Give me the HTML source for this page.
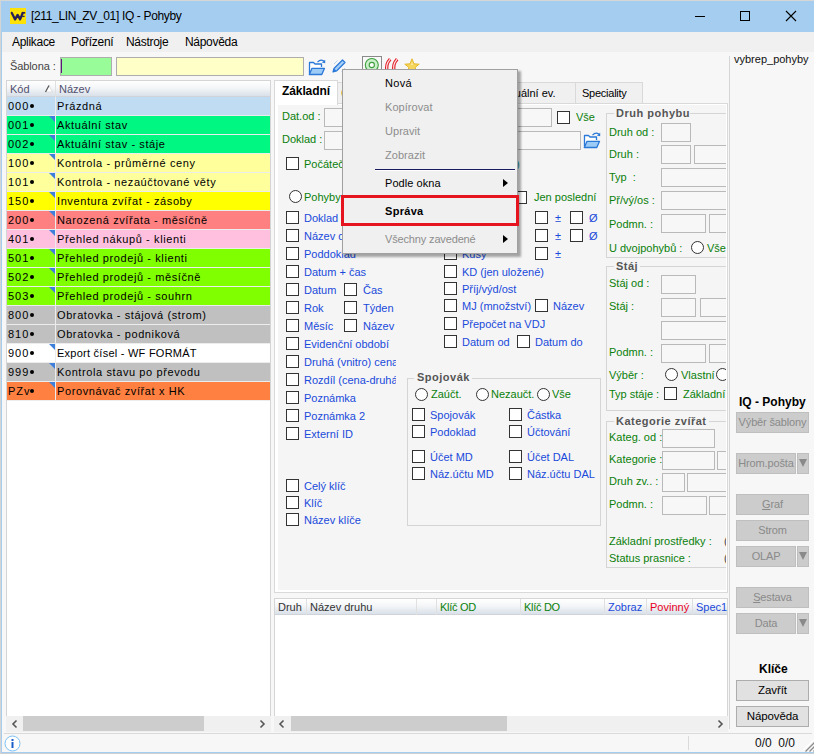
<!DOCTYPE html><html><head><meta charset="utf-8"><style>
*{box-sizing:border-box;margin:0;padding:0}
html,body{width:814px;height:754px;overflow:hidden;background:#cfcfcf}
body{position:relative;font-family:"Liberation Sans",sans-serif;font-size:11px;color:#000}
.a{position:absolute}
.t{position:absolute;white-space:nowrap;line-height:1}
</style></head><body><div class="a" style="left:1px;top:0px;width:813px;height:753px;background:#f7f7f7;border-left:1px solid #a4cdf0;border-bottom:1px solid #a4cdf0"></div>
<div class="a" style="left:0px;top:0px;width:1px;height:754px;background:#d4d4d4"></div>
<div class="a" style="left:1px;top:0px;width:813px;height:32px;background:#a4cdf0"></div>
<div class="a" style="left:0px;top:0px;width:814px;height:1px;background:#d6d6d6"></div>
<div class="a" style="left:2px;top:32px;width:812px;height:20px;background:#f0f0f0"></div>
<svg class="a" style="left:10px;top:8px" width="16" height="16" viewBox="0 0 16 16"><rect width="16" height="16" fill="#ffe205"/><path d="M1.8 4.9L5.1 11.4L7.6 6.9L10.1 11.4L12.7 5" fill="none" stroke="#2a2058" stroke-width="2.3" stroke-linejoin="round" stroke-linecap="round"/><path d="M11.8 4.8H15.2" stroke="#2a2058" stroke-width="1.7"/><path d="M12.2 8.4H14.6" stroke="#2a2058" stroke-width="1.3"/></svg>
<div class="t" style="left:31px;top:10px;font-size:12px;color:#000;font-weight:400;letter-spacing:-0.35px;">[211_LIN_ZV_01] IQ - Pohyby</div>
<div class="a" style="left:695px;top:16px;width:10px;height:1px;background:#000"></div>
<div class="a" style="left:740px;top:11px;width:10px;height:10px;border:1px solid #000"></div>
<svg class="a" style="left:785px;top:10px" width="12" height="12" viewBox="0 0 12 12"><path d="M1 1L11 11M11 1L1 11" stroke="#000" stroke-width="1.1"/></svg>
<div class="t" style="left:12px;top:36px;font-size:12px;color:#000;font-weight:400;letter-spacing:-0.3px;">Aplikace</div>
<div class="t" style="left:71px;top:36px;font-size:12px;color:#000;font-weight:400;letter-spacing:-0.3px;">Pořízení</div>
<div class="t" style="left:126px;top:36px;font-size:12px;color:#000;font-weight:400;letter-spacing:-0.3px;">Nástroje</div>
<div class="t" style="left:185px;top:36px;font-size:12px;color:#000;font-weight:400;letter-spacing:-0.3px;">Nápověda</div>
<div class="t" style="left:10px;top:61px;font-size:11px;color:#444;font-weight:400;letter-spacing:-0.1px;">Šablona :</div>
<div class="a" style="left:60px;top:57px;width:52px;height:19px;background:#98fc98;border:1px solid #adadad"></div>
<div class="a" style="left:61px;top:59px;width:1px;height:14px;background:#5a1a7a"></div>
<div class="a" style="left:116px;top:57px;width:188px;height:19px;background:#ffffc8;border:1px solid #adadad"></div>
<div class="a" style="left:6px;top:80px;width:265px;height:636px;background:#fff;border:1px solid #d5d5d5;border-bottom:none"></div>
<div class="a" style="left:7px;top:81px;width:263px;height:16px;background:linear-gradient(#ffffff,#f3f5f7 45%,#d6dee7)"></div>
<div class="a" style="left:7px;top:96px;width:263px;height:1px;background:#d0d4da"></div>
<div class="a" style="left:55px;top:81px;width:1px;height:16px;background:#e0e0e0"></div>
<div class="t" style="left:10px;top:84px;font-size:11px;color:#505070;font-weight:400;letter-spacing:0px;">Kód</div>
<svg class="a" style="left:44px;top:84px" width="10" height="9" viewBox="0 0 10 9"><path d="M1.5 8L5 1.5L8.5 8Z" fill="#fff" stroke="#d8d8d8" stroke-width="0.8"/><path d="M1.5 8L5 1.5" stroke="#555" stroke-width="1.2"/></svg>
<div class="t" style="left:59px;top:84px;font-size:11px;color:#505070;font-weight:400;letter-spacing:0px;">Název</div>
<div class="a" style="left:7px;top:97px;width:48px;height:18px;background:#c0dcf3"></div>
<div class="a" style="left:56px;top:97px;width:214px;height:18px;background:#c0dcf3"></div>
<div class="a" style="left:7px;top:115px;width:263px;height:1px;background:#ececec"></div>
<div class="a" style="left:55px;top:97px;width:1px;height:18px;background:#ececec"></div>
<div class="t" style="left:8px;top:101px;font-size:11px;color:#000;font-weight:400;letter-spacing:1.0px;">000</div>
<div class="a" style="left:30px;top:104px;width:4.3px;height:4.3px;border-radius:50%;background:#000"></div>
<div class="t" style="left:57px;top:101px;font-size:11px;color:#000;font-weight:400;letter-spacing:0.6px;">Prázdná</div>
<div class="a" style="left:7px;top:116px;width:48px;height:18px;background:#00f882"></div>
<div class="a" style="left:56px;top:116px;width:214px;height:18px;background:#00f882"></div>
<div class="a" style="left:7px;top:134px;width:263px;height:1px;background:#ececec"></div>
<div class="a" style="left:55px;top:116px;width:1px;height:18px;background:#ececec"></div>
<div class="a" style="left:49px;top:116px;width:0;height:0;border-top:6px solid #3f7fdc;border-left:6px solid transparent"></div>
<div class="t" style="left:8px;top:120px;font-size:11px;color:#000;font-weight:400;letter-spacing:1.0px;">001</div>
<div class="a" style="left:30px;top:123px;width:4.3px;height:4.3px;border-radius:50%;background:#000"></div>
<div class="t" style="left:57px;top:120px;font-size:11px;color:#000;font-weight:400;letter-spacing:0.6px;">Aktuální stav</div>
<div class="a" style="left:7px;top:135px;width:48px;height:18px;background:#00f882"></div>
<div class="a" style="left:56px;top:135px;width:214px;height:18px;background:#00f882"></div>
<div class="a" style="left:7px;top:153px;width:263px;height:1px;background:#ececec"></div>
<div class="a" style="left:55px;top:135px;width:1px;height:18px;background:#ececec"></div>
<div class="a" style="left:49px;top:135px;width:0;height:0;border-top:6px solid #3f7fdc;border-left:6px solid transparent"></div>
<div class="t" style="left:8px;top:139px;font-size:11px;color:#000;font-weight:400;letter-spacing:1.0px;">002</div>
<div class="a" style="left:30px;top:142px;width:4.3px;height:4.3px;border-radius:50%;background:#000"></div>
<div class="t" style="left:57px;top:139px;font-size:11px;color:#000;font-weight:400;letter-spacing:0.6px;">Aktuální stav - stáje</div>
<div class="a" style="left:7px;top:154px;width:48px;height:18px;background:#ffff9c"></div>
<div class="a" style="left:56px;top:154px;width:214px;height:18px;background:#ffff9c"></div>
<div class="a" style="left:7px;top:172px;width:263px;height:1px;background:#ececec"></div>
<div class="a" style="left:55px;top:154px;width:1px;height:18px;background:#ececec"></div>
<div class="a" style="left:49px;top:154px;width:0;height:0;border-top:6px solid #3f7fdc;border-left:6px solid transparent"></div>
<div class="t" style="left:8px;top:158px;font-size:11px;color:#000;font-weight:400;letter-spacing:1.0px;">100</div>
<div class="a" style="left:30px;top:161px;width:4.3px;height:4.3px;border-radius:50%;background:#000"></div>
<div class="t" style="left:57px;top:158px;font-size:11px;color:#000;font-weight:400;letter-spacing:0.6px;">Kontrola - průměrné ceny</div>
<div class="a" style="left:7px;top:173px;width:48px;height:18px;background:#ffff9c"></div>
<div class="a" style="left:56px;top:173px;width:214px;height:18px;background:#ffff9c"></div>
<div class="a" style="left:7px;top:191px;width:263px;height:1px;background:#ececec"></div>
<div class="a" style="left:55px;top:173px;width:1px;height:18px;background:#ececec"></div>
<div class="a" style="left:49px;top:173px;width:0;height:0;border-top:6px solid #3f7fdc;border-left:6px solid transparent"></div>
<div class="t" style="left:8px;top:177px;font-size:11px;color:#000;font-weight:400;letter-spacing:1.0px;">101</div>
<div class="a" style="left:30px;top:180px;width:4.3px;height:4.3px;border-radius:50%;background:#000"></div>
<div class="t" style="left:57px;top:177px;font-size:11px;color:#000;font-weight:400;letter-spacing:0.6px;">Kontrola - nezaúčtované věty</div>
<div class="a" style="left:7px;top:192px;width:48px;height:18px;background:#ffff00"></div>
<div class="a" style="left:56px;top:192px;width:214px;height:18px;background:#ffff00"></div>
<div class="a" style="left:7px;top:210px;width:263px;height:1px;background:#ececec"></div>
<div class="a" style="left:55px;top:192px;width:1px;height:18px;background:#ececec"></div>
<div class="a" style="left:49px;top:192px;width:0;height:0;border-top:6px solid #3f7fdc;border-left:6px solid transparent"></div>
<div class="t" style="left:8px;top:196px;font-size:11px;color:#000;font-weight:400;letter-spacing:1.0px;">150</div>
<div class="a" style="left:30px;top:199px;width:4.3px;height:4.3px;border-radius:50%;background:#000"></div>
<div class="t" style="left:57px;top:196px;font-size:11px;color:#000;font-weight:400;letter-spacing:0.6px;">Inventura zvířat - zásoby</div>
<div class="a" style="left:7px;top:211px;width:48px;height:18px;background:#ff8080"></div>
<div class="a" style="left:56px;top:211px;width:214px;height:18px;background:#ff8080"></div>
<div class="a" style="left:7px;top:229px;width:263px;height:1px;background:#ececec"></div>
<div class="a" style="left:55px;top:211px;width:1px;height:18px;background:#ececec"></div>
<div class="a" style="left:49px;top:211px;width:0;height:0;border-top:6px solid #3f7fdc;border-left:6px solid transparent"></div>
<div class="t" style="left:8px;top:215px;font-size:11px;color:#000;font-weight:400;letter-spacing:1.0px;">200</div>
<div class="a" style="left:30px;top:218px;width:4.3px;height:4.3px;border-radius:50%;background:#000"></div>
<div class="t" style="left:57px;top:215px;font-size:11px;color:#000;font-weight:400;letter-spacing:0.6px;">Narozená zvířata - měsíčně</div>
<div class="a" style="left:7px;top:230px;width:48px;height:18px;background:#ffc0df"></div>
<div class="a" style="left:56px;top:230px;width:214px;height:18px;background:#ffc0df"></div>
<div class="a" style="left:7px;top:248px;width:263px;height:1px;background:#ececec"></div>
<div class="a" style="left:55px;top:230px;width:1px;height:18px;background:#ececec"></div>
<div class="a" style="left:49px;top:230px;width:0;height:0;border-top:6px solid #3f7fdc;border-left:6px solid transparent"></div>
<div class="t" style="left:8px;top:234px;font-size:11px;color:#000;font-weight:400;letter-spacing:1.0px;">401</div>
<div class="a" style="left:30px;top:237px;width:4.3px;height:4.3px;border-radius:50%;background:#000"></div>
<div class="t" style="left:57px;top:234px;font-size:11px;color:#000;font-weight:400;letter-spacing:0.6px;">Přehled nákupů - klienti</div>
<div class="a" style="left:7px;top:249px;width:48px;height:18px;background:#80ff00"></div>
<div class="a" style="left:56px;top:249px;width:214px;height:18px;background:#80ff00"></div>
<div class="a" style="left:7px;top:267px;width:263px;height:1px;background:#ececec"></div>
<div class="a" style="left:55px;top:249px;width:1px;height:18px;background:#ececec"></div>
<div class="a" style="left:49px;top:249px;width:0;height:0;border-top:6px solid #3f7fdc;border-left:6px solid transparent"></div>
<div class="t" style="left:8px;top:253px;font-size:11px;color:#000;font-weight:400;letter-spacing:1.0px;">501</div>
<div class="a" style="left:30px;top:256px;width:4.3px;height:4.3px;border-radius:50%;background:#000"></div>
<div class="t" style="left:57px;top:253px;font-size:11px;color:#000;font-weight:400;letter-spacing:0.6px;">Přehled prodejů - klienti</div>
<div class="a" style="left:7px;top:268px;width:48px;height:18px;background:#80ff00"></div>
<div class="a" style="left:56px;top:268px;width:214px;height:18px;background:#80ff00"></div>
<div class="a" style="left:7px;top:286px;width:263px;height:1px;background:#ececec"></div>
<div class="a" style="left:55px;top:268px;width:1px;height:18px;background:#ececec"></div>
<div class="a" style="left:49px;top:268px;width:0;height:0;border-top:6px solid #3f7fdc;border-left:6px solid transparent"></div>
<div class="t" style="left:8px;top:272px;font-size:11px;color:#000;font-weight:400;letter-spacing:1.0px;">502</div>
<div class="a" style="left:30px;top:275px;width:4.3px;height:4.3px;border-radius:50%;background:#000"></div>
<div class="t" style="left:57px;top:272px;font-size:11px;color:#000;font-weight:400;letter-spacing:0.6px;">Přehled prodejů - měsíčně</div>
<div class="a" style="left:7px;top:287px;width:48px;height:18px;background:#80ff00"></div>
<div class="a" style="left:56px;top:287px;width:214px;height:18px;background:#80ff00"></div>
<div class="a" style="left:7px;top:305px;width:263px;height:1px;background:#ececec"></div>
<div class="a" style="left:55px;top:287px;width:1px;height:18px;background:#ececec"></div>
<div class="a" style="left:49px;top:287px;width:0;height:0;border-top:6px solid #3f7fdc;border-left:6px solid transparent"></div>
<div class="t" style="left:8px;top:291px;font-size:11px;color:#000;font-weight:400;letter-spacing:1.0px;">503</div>
<div class="a" style="left:30px;top:294px;width:4.3px;height:4.3px;border-radius:50%;background:#000"></div>
<div class="t" style="left:57px;top:291px;font-size:11px;color:#000;font-weight:400;letter-spacing:0.6px;">Přehled prodejů - souhrn</div>
<div class="a" style="left:7px;top:306px;width:48px;height:18px;background:#c0c0c0"></div>
<div class="a" style="left:56px;top:306px;width:214px;height:18px;background:#c0c0c0"></div>
<div class="a" style="left:7px;top:324px;width:263px;height:1px;background:#ececec"></div>
<div class="a" style="left:55px;top:306px;width:1px;height:18px;background:#ececec"></div>
<div class="t" style="left:8px;top:310px;font-size:11px;color:#000;font-weight:400;letter-spacing:1.0px;">800</div>
<div class="a" style="left:30px;top:313px;width:4.3px;height:4.3px;border-radius:50%;background:#000"></div>
<div class="t" style="left:57px;top:310px;font-size:11px;color:#000;font-weight:400;letter-spacing:0.6px;">Obratovka - stájová (strom)</div>
<div class="a" style="left:7px;top:325px;width:48px;height:18px;background:#c0c0c0"></div>
<div class="a" style="left:56px;top:325px;width:214px;height:18px;background:#c0c0c0"></div>
<div class="a" style="left:7px;top:343px;width:263px;height:1px;background:#ececec"></div>
<div class="a" style="left:55px;top:325px;width:1px;height:18px;background:#ececec"></div>
<div class="t" style="left:8px;top:329px;font-size:11px;color:#000;font-weight:400;letter-spacing:1.0px;">810</div>
<div class="a" style="left:30px;top:332px;width:4.3px;height:4.3px;border-radius:50%;background:#000"></div>
<div class="t" style="left:57px;top:329px;font-size:11px;color:#000;font-weight:400;letter-spacing:0.6px;">Obratovka - podniková</div>
<div class="a" style="left:7px;top:344px;width:48px;height:18px;background:#ffffff"></div>
<div class="a" style="left:56px;top:344px;width:214px;height:18px;background:#ffffff"></div>
<div class="a" style="left:7px;top:362px;width:263px;height:1px;background:#ececec"></div>
<div class="a" style="left:55px;top:344px;width:1px;height:18px;background:#ececec"></div>
<div class="a" style="left:49px;top:344px;width:0;height:0;border-top:6px solid #3f7fdc;border-left:6px solid transparent"></div>
<div class="t" style="left:8px;top:348px;font-size:11px;color:#000;font-weight:400;letter-spacing:1.0px;">900</div>
<div class="a" style="left:30px;top:351px;width:4.3px;height:4.3px;border-radius:50%;background:#000"></div>
<div class="t" style="left:57px;top:348px;font-size:11px;color:#000;font-weight:400;letter-spacing:0.25px;">Export čísel - WF FORMÁT</div>
<div class="a" style="left:7px;top:363px;width:48px;height:18px;background:#c0c0c0"></div>
<div class="a" style="left:56px;top:363px;width:214px;height:18px;background:#c0c0c0"></div>
<div class="a" style="left:7px;top:381px;width:263px;height:1px;background:#ececec"></div>
<div class="a" style="left:55px;top:363px;width:1px;height:18px;background:#ececec"></div>
<div class="a" style="left:49px;top:363px;width:0;height:0;border-top:6px solid #3f7fdc;border-left:6px solid transparent"></div>
<div class="t" style="left:8px;top:367px;font-size:11px;color:#000;font-weight:400;letter-spacing:1.0px;">999</div>
<div class="a" style="left:30px;top:370px;width:4.3px;height:4.3px;border-radius:50%;background:#000"></div>
<div class="t" style="left:57px;top:367px;font-size:11px;color:#000;font-weight:400;letter-spacing:0.6px;">Kontrola stavu po převodu</div>
<div class="a" style="left:7px;top:382px;width:48px;height:18px;background:#ff8040"></div>
<div class="a" style="left:56px;top:382px;width:214px;height:18px;background:#ff8040"></div>
<div class="a" style="left:7px;top:400px;width:263px;height:1px;background:#ececec"></div>
<div class="a" style="left:55px;top:382px;width:1px;height:18px;background:#ececec"></div>
<div class="a" style="left:49px;top:382px;width:0;height:0;border-top:6px solid #3f7fdc;border-left:6px solid transparent"></div>
<div class="t" style="left:8px;top:386px;font-size:11px;color:#000;font-weight:400;letter-spacing:1.0px;">PZv</div>
<div class="a" style="left:30px;top:389px;width:4.3px;height:4.3px;border-radius:50%;background:#000"></div>
<div class="t" style="left:57px;top:386px;font-size:11px;color:#000;font-weight:400;letter-spacing:0.6px;">Porovnávač zvířat x HK</div>
<div class="a" style="left:6px;top:716px;width:265px;height:16px;background:#f0f0f0"></div>
<div class="a" style="left:23px;top:716px;width:181px;height:15px;background:#cdcdcd"></div>
<svg class="a" style="left:10px;top:719px" width="10" height="10" viewBox="0 0 10 10"><path d="M6.5 1.5L3 5L6.5 8.5" fill="none" stroke="#555" stroke-width="1.6"/></svg>
<svg class="a" style="left:257px;top:719px" width="10" height="10" viewBox="0 0 10 10"><path d="M3.5 1.5L7 5L3.5 8.5" fill="none" stroke="#555" stroke-width="1.6"/></svg>
<div class="a" style="left:274px;top:103px;width:454px;height:490px;background:#fff;border:1px solid #d9d9d9"></div>
<div class="a" style="left:278px;top:105px;width:448px;height:485px;background:#f5f5f5"></div>
<div class="a" style="left:337px;top:82px;width:70px;height:21px;background:#f0f0f0;border:1px solid #d9d9d9;border-bottom:none"></div>
<div class="t" style="left:341px;top:88px;font-size:11px;color:#d89a30;font-weight:400;letter-spacing:0px;">Ostatní</div>
<div class="a" style="left:407px;top:82px;width:69px;height:21px;background:#f0f0f0;border:1px solid #d9d9d9;border-bottom:none"></div>
<div class="a" style="left:476px;top:82px;width:100px;height:21px;background:#f0f0f0;border:1px solid #d9d9d9;border-bottom:none"></div>
<div class="a" style="left:575px;top:82px;width:68px;height:21px;background:#f0f0f0;border:1px solid #d9d9d9;border-bottom:none"></div>
<div class="t" style="left:483px;top:88px;font-size:11px;color:#000;font-weight:400;letter-spacing:0px;">Individuální ev.</div>
<div class="t" style="left:582px;top:88px;font-size:11px;color:#000;font-weight:400;letter-spacing:-0.25px;">Speciality</div>
<div class="a" style="left:274px;top:80px;width:64px;height:25px;background:#fff;border:1px solid #d9d9d9;border-bottom:none"></div>
<div class="t" style="left:282px;top:85px;font-size:12px;color:#000;font-weight:700;letter-spacing:-0.1px;">Základní</div>
<div class="t" style="left:282px;top:111px;font-size:11px;color:#0a800a;font-weight:400;letter-spacing:0px;">Dat.od :</div>
<div class="a" style="left:324px;top:108px;width:228px;height:19px;border:1px solid #b9b9b9;background:#f7f7f7"></div>
<div class="a" style="left:557px;top:111px;width:13px;height:13px;border:1px solid #333;background:#fff"></div>
<div class="t" style="left:576px;top:112px;font-size:11px;color:#0a800a;font-weight:400;letter-spacing:0px;">Vše</div>
<div class="t" style="left:282px;top:134px;font-size:11px;color:#0a800a;font-weight:400;letter-spacing:0px;">Doklad :</div>
<div class="a" style="left:324px;top:131px;width:257px;height:19px;border:1px solid #b9b9b9;background:#f7f7f7"></div>
<div class="t" style="left:516px;top:159px;font-size:11px;color:#1a8a8a;font-weight:400;letter-spacing:0px;">)</div>
<div class="a" style="left:286px;top:157px;width:13px;height:13px;border:1px solid #333;background:#fff"></div>
<div class="t" style="left:304px;top:159px;font-size:11px;color:#0a800a;font-weight:400;letter-spacing:0px;">Počáteční stav</div>
<div class="a" style="left:289px;top:190px;width:13px;height:13px;border:1px solid #333;background:#fff;border-radius:50%"></div>
<div class="t" style="left:304px;top:192px;font-size:11px;color:#0a800a;font-weight:400;letter-spacing:0px;">Pohyby</div>
<div class="a" style="left:514px;top:191px;width:13px;height:13px;border:1px solid #333;background:#fff"></div>
<div class="t" style="left:534px;top:192px;font-size:11px;color:#0a800a;font-weight:400;letter-spacing:0px;">Jen poslední</div>
<div class="a" style="left:286px;top:211px;width:13px;height:13px;border:1px solid #333;background:#fff"></div>
<div class="t" style="left:304px;top:213px;font-size:11px;color:#1a4adb;font-weight:400;letter-spacing:0px;width:92px;overflow:hidden">Doklad</div>
<div class="a" style="left:286px;top:229px;width:13px;height:13px;border:1px solid #333;background:#fff"></div>
<div class="t" style="left:304px;top:231px;font-size:11px;color:#1a4adb;font-weight:400;letter-spacing:0px;width:92px;overflow:hidden">Název dokladu</div>
<div class="a" style="left:286px;top:247px;width:13px;height:13px;border:1px solid #333;background:#fff"></div>
<div class="t" style="left:304px;top:249px;font-size:11px;color:#1a4adb;font-weight:400;letter-spacing:0px;width:92px;overflow:hidden">Poddoklad</div>
<div class="a" style="left:286px;top:265px;width:13px;height:13px;border:1px solid #333;background:#fff"></div>
<div class="t" style="left:304px;top:267px;font-size:11px;color:#1a4adb;font-weight:400;letter-spacing:0px;width:92px;overflow:hidden">Datum + čas</div>
<div class="a" style="left:286px;top:283px;width:13px;height:13px;border:1px solid #333;background:#fff"></div>
<div class="t" style="left:304px;top:285px;font-size:11px;color:#1a4adb;font-weight:400;letter-spacing:0px;width:92px;overflow:hidden">Datum</div>
<div class="a" style="left:286px;top:301px;width:13px;height:13px;border:1px solid #333;background:#fff"></div>
<div class="t" style="left:304px;top:303px;font-size:11px;color:#1a4adb;font-weight:400;letter-spacing:0px;width:92px;overflow:hidden">Rok</div>
<div class="a" style="left:286px;top:319px;width:13px;height:13px;border:1px solid #333;background:#fff"></div>
<div class="t" style="left:304px;top:321px;font-size:11px;color:#1a4adb;font-weight:400;letter-spacing:0px;width:92px;overflow:hidden">Měsíc</div>
<div class="a" style="left:286px;top:337px;width:13px;height:13px;border:1px solid #333;background:#fff"></div>
<div class="t" style="left:304px;top:339px;font-size:11px;color:#1a4adb;font-weight:400;letter-spacing:0px;width:92px;overflow:hidden">Evidenční období</div>
<div class="a" style="left:286px;top:355px;width:13px;height:13px;border:1px solid #333;background:#fff"></div>
<div class="t" style="left:304px;top:357px;font-size:11px;color:#1a4adb;font-weight:400;letter-spacing:0px;width:92px;overflow:hidden">Druhá (vnitro) cena</div>
<div class="a" style="left:286px;top:373px;width:13px;height:13px;border:1px solid #333;background:#fff"></div>
<div class="t" style="left:304px;top:375px;font-size:11px;color:#1a4adb;font-weight:400;letter-spacing:0px;width:92px;overflow:hidden">Rozdíl (cena-druhá)</div>
<div class="a" style="left:286px;top:391px;width:13px;height:13px;border:1px solid #333;background:#fff"></div>
<div class="t" style="left:304px;top:393px;font-size:11px;color:#1a4adb;font-weight:400;letter-spacing:0px;width:92px;overflow:hidden">Poznámka</div>
<div class="a" style="left:286px;top:409px;width:13px;height:13px;border:1px solid #333;background:#fff"></div>
<div class="t" style="left:304px;top:411px;font-size:11px;color:#1a4adb;font-weight:400;letter-spacing:0px;width:92px;overflow:hidden">Poznámka 2</div>
<div class="a" style="left:286px;top:427px;width:13px;height:13px;border:1px solid #333;background:#fff"></div>
<div class="t" style="left:304px;top:429px;font-size:11px;color:#1a4adb;font-weight:400;letter-spacing:0px;width:92px;overflow:hidden">Externí ID</div>
<div class="a" style="left:344px;top:283px;width:13px;height:13px;border:1px solid #333;background:#fff"></div>
<div class="t" style="left:363px;top:285px;font-size:11px;color:#1a4adb;font-weight:400;letter-spacing:0px;">Čas</div>
<div class="a" style="left:344px;top:301px;width:13px;height:13px;border:1px solid #333;background:#fff"></div>
<div class="t" style="left:363px;top:303px;font-size:11px;color:#1a4adb;font-weight:400;letter-spacing:0px;">Týden</div>
<div class="a" style="left:344px;top:319px;width:13px;height:13px;border:1px solid #333;background:#fff"></div>
<div class="t" style="left:363px;top:321px;font-size:11px;color:#1a4adb;font-weight:400;letter-spacing:0px;">Název</div>
<div class="a" style="left:535px;top:211px;width:13px;height:13px;border:1px solid #333;background:#fff"></div>
<div class="t" style="left:555px;top:213px;font-size:11px;color:#1a4adb;font-weight:400;letter-spacing:0px;">±</div>
<div class="a" style="left:570px;top:211px;width:13px;height:13px;border:1px solid #333;background:#fff"></div>
<div class="t" style="left:589px;top:213px;font-size:11px;color:#1a4adb;font-weight:400;letter-spacing:0px;">Ø</div>
<div class="a" style="left:444px;top:211px;width:13px;height:13px;border:1px solid #333;background:#fff"></div>
<div class="a" style="left:535px;top:229px;width:13px;height:13px;border:1px solid #333;background:#fff"></div>
<div class="t" style="left:555px;top:231px;font-size:11px;color:#1a4adb;font-weight:400;letter-spacing:0px;">±</div>
<div class="a" style="left:570px;top:229px;width:13px;height:13px;border:1px solid #333;background:#fff"></div>
<div class="t" style="left:589px;top:231px;font-size:11px;color:#1a4adb;font-weight:400;letter-spacing:0px;">Ø</div>
<div class="a" style="left:444px;top:229px;width:13px;height:13px;border:1px solid #333;background:#fff"></div>
<div class="a" style="left:535px;top:247px;width:13px;height:13px;border:1px solid #333;background:#fff"></div>
<div class="t" style="left:555px;top:249px;font-size:11px;color:#1a4adb;font-weight:400;letter-spacing:0px;">±</div>
<div class="a" style="left:444px;top:247px;width:13px;height:13px;border:1px solid #333;background:#fff"></div>
<div class="t" style="left:462px;top:249px;font-size:11px;color:#1a4adb;font-weight:400;letter-spacing:0px;">Kusy</div>
<div class="a" style="left:444px;top:265px;width:13px;height:13px;border:1px solid #333;background:#fff"></div>
<div class="t" style="left:462px;top:267px;font-size:11px;color:#1a4adb;font-weight:400;letter-spacing:0px;">KD (jen uložené)</div>
<div class="a" style="left:444px;top:282px;width:13px;height:13px;border:1px solid #333;background:#fff"></div>
<div class="t" style="left:462px;top:284px;font-size:11px;color:#1a4adb;font-weight:400;letter-spacing:0px;">Příj/výd/ost</div>
<div class="a" style="left:444px;top:299px;width:13px;height:13px;border:1px solid #333;background:#fff"></div>
<div class="t" style="left:462px;top:301px;font-size:11px;color:#1a4adb;font-weight:400;letter-spacing:0px;">MJ (množství)</div>
<div class="a" style="left:444px;top:317px;width:13px;height:13px;border:1px solid #333;background:#fff"></div>
<div class="t" style="left:462px;top:319px;font-size:11px;color:#1a4adb;font-weight:400;letter-spacing:0px;">Přepočet na VDJ</div>
<div class="a" style="left:444px;top:335px;width:13px;height:13px;border:1px solid #333;background:#fff"></div>
<div class="t" style="left:462px;top:337px;font-size:11px;color:#1a4adb;font-weight:400;letter-spacing:0px;">Datum od</div>
<div class="a" style="left:535px;top:299px;width:13px;height:13px;border:1px solid #333;background:#fff"></div>
<div class="t" style="left:553px;top:301px;font-size:11px;color:#1a4adb;font-weight:400;letter-spacing:0px;">Název</div>
<div class="a" style="left:517px;top:335px;width:13px;height:13px;border:1px solid #333;background:#fff"></div>
<div class="t" style="left:535px;top:337px;font-size:11px;color:#1a4adb;font-weight:400;letter-spacing:0px;">Datum do</div>
<div class="a" style="left:407px;top:378px;width:194px;height:148px;border:1px solid #d5d5d5"></div>
<div class="a" style="left:414px;top:371px;width:58px;height:14px;background:#f5f5f5"></div>
<div class="t" style="left:417px;top:372px;font-size:11px;color:#555;font-weight:700;letter-spacing:0.5px;">Spojovák</div>
<div class="a" style="left:415px;top:388px;width:13px;height:13px;border:1px solid #333;background:#fff;border-radius:50%"></div>
<div class="t" style="left:431px;top:389px;font-size:11px;color:#0a800a;font-weight:400;letter-spacing:0px;">Zaúčt.</div>
<div class="a" style="left:476px;top:388px;width:13px;height:13px;border:1px solid #333;background:#fff;border-radius:50%"></div>
<div class="t" style="left:491px;top:389px;font-size:11px;color:#0a800a;font-weight:400;letter-spacing:0px;">Nezaučt.</div>
<div class="a" style="left:537px;top:388px;width:13px;height:13px;border:1px solid #333;background:#fff;border-radius:50%"></div>
<div class="t" style="left:552px;top:389px;font-size:11px;color:#0a800a;font-weight:400;letter-spacing:0px;">Vše</div>
<div class="a" style="left:412px;top:408px;width:13px;height:13px;border:1px solid #333;background:#fff"></div>
<div class="t" style="left:430px;top:410px;font-size:11px;color:#1a4adb;font-weight:400;letter-spacing:0px;">Spojovák</div>
<div class="a" style="left:509px;top:408px;width:13px;height:13px;border:1px solid #333;background:#fff"></div>
<div class="t" style="left:527px;top:410px;font-size:11px;color:#1a4adb;font-weight:400;letter-spacing:0px;">Částka</div>
<div class="a" style="left:412px;top:425px;width:13px;height:13px;border:1px solid #333;background:#fff"></div>
<div class="t" style="left:430px;top:427px;font-size:11px;color:#1a4adb;font-weight:400;letter-spacing:0px;">Podoklad</div>
<div class="a" style="left:509px;top:425px;width:13px;height:13px;border:1px solid #333;background:#fff"></div>
<div class="t" style="left:527px;top:427px;font-size:11px;color:#1a4adb;font-weight:400;letter-spacing:0px;">Účtování</div>
<div class="a" style="left:412px;top:450px;width:13px;height:13px;border:1px solid #333;background:#fff"></div>
<div class="t" style="left:430px;top:452px;font-size:11px;color:#1a4adb;font-weight:400;letter-spacing:0px;">Účet MD</div>
<div class="a" style="left:509px;top:450px;width:13px;height:13px;border:1px solid #333;background:#fff"></div>
<div class="t" style="left:527px;top:452px;font-size:11px;color:#1a4adb;font-weight:400;letter-spacing:0px;">Účet DAL</div>
<div class="a" style="left:412px;top:467px;width:13px;height:13px;border:1px solid #333;background:#fff"></div>
<div class="t" style="left:430px;top:469px;font-size:11px;color:#1a4adb;font-weight:400;letter-spacing:0px;">Náz.účtu MD</div>
<div class="a" style="left:509px;top:467px;width:13px;height:13px;border:1px solid #333;background:#fff"></div>
<div class="t" style="left:527px;top:469px;font-size:11px;color:#1a4adb;font-weight:400;letter-spacing:0px;">Náz.účtu DAL</div>
<div class="a" style="left:286px;top:479px;width:13px;height:13px;border:1px solid #333;background:#fff"></div>
<div class="t" style="left:304px;top:481px;font-size:11px;color:#1a4adb;font-weight:400;letter-spacing:0px;">Celý klíč</div>
<div class="a" style="left:286px;top:496px;width:13px;height:13px;border:1px solid #333;background:#fff"></div>
<div class="t" style="left:304px;top:498px;font-size:11px;color:#1a4adb;font-weight:400;letter-spacing:0px;">Klíč</div>
<div class="a" style="left:286px;top:513px;width:13px;height:13px;border:1px solid #333;background:#fff"></div>
<div class="t" style="left:304px;top:515px;font-size:11px;color:#1a4adb;font-weight:400;letter-spacing:0px;">Název klíče</div>
<div class="a" style="left:0;top:0;width:726px;height:590px;overflow:hidden">
<div class="a" style="left:606px;top:113px;width:125px;height:145px;border:1px solid #d5d5d5;border-right:none"></div>
<div class="a" style="left:614px;top:106px;width:76px;height:14px;background:#f5f5f5"></div>
<div class="t" style="left:616px;top:108px;font-size:11px;color:#555;font-weight:700;letter-spacing:0.5px;">Druh pohybu</div>
<div class="t" style="left:609px;top:127px;font-size:11px;color:#0a800a;font-weight:400;letter-spacing:0px;">Druh od :</div>
<div class="a" style="left:661px;top:123px;width:30px;height:19px;border:1px solid #b9b9b9;background:#f7f7f7"></div>
<div class="t" style="left:609px;top:149px;font-size:11px;color:#0a800a;font-weight:400;letter-spacing:0px;">Druh :</div>
<div class="a" style="left:661px;top:145px;width:30px;height:19px;border:1px solid #b9b9b9;background:#f7f7f7"></div>
<div class="a" style="left:694px;top:145px;width:40px;height:19px;border:1px solid #b9b9b9;background:#f7f7f7"></div>
<div class="t" style="left:609px;top:172px;font-size:11px;color:#0a800a;font-weight:400;letter-spacing:0px;">Typ &nbsp;:</div>
<div class="a" style="left:661px;top:168px;width:70px;height:19px;border:1px solid #b9b9b9;background:#f7f7f7"></div>
<div class="t" style="left:609px;top:195px;font-size:11px;color:#0a800a;font-weight:400;letter-spacing:0px;">Př/vý/os :</div>
<div class="a" style="left:661px;top:191px;width:70px;height:19px;border:1px solid #b9b9b9;background:#f7f7f7"></div>
<div class="t" style="left:609px;top:219px;font-size:11px;color:#0a800a;font-weight:400;letter-spacing:0px;">Podmn. :</div>
<div class="a" style="left:661px;top:214px;width:45px;height:19px;border:1px solid #b9b9b9;background:#f7f7f7"></div>
<div class="a" style="left:709px;top:214px;width:30px;height:19px;border:1px solid #b9b9b9;background:#f7f7f7"></div>
<div class="t" style="left:609px;top:243px;font-size:11px;color:#0a800a;font-weight:400;letter-spacing:0px;">U dvojpohybů :</div>
<div class="a" style="left:691px;top:241px;width:13px;height:13px;border:1px solid #333;background:#fff;border-radius:50%"></div>
<div class="t" style="left:707px;top:243px;font-size:11px;color:#0a800a;font-weight:400;letter-spacing:0px;">Vše</div>
<div class="a" style="left:606px;top:266px;width:125px;height:145px;border:1px solid #d5d5d5;border-right:none"></div>
<div class="a" style="left:614px;top:259px;width:26px;height:14px;background:#f5f5f5"></div>
<div class="t" style="left:616px;top:261px;font-size:11px;color:#555;font-weight:700;letter-spacing:0.5px;">Stáj</div>
<div class="t" style="left:609px;top:278px;font-size:11px;color:#0a800a;font-weight:400;letter-spacing:0px;">Stáj od :</div>
<div class="a" style="left:661px;top:275px;width:35px;height:19px;border:1px solid #b9b9b9;background:#f7f7f7"></div>
<div class="t" style="left:609px;top:301px;font-size:11px;color:#0a800a;font-weight:400;letter-spacing:0px;">Stáj :</div>
<div class="a" style="left:661px;top:298px;width:35px;height:19px;border:1px solid #b9b9b9;background:#f7f7f7"></div>
<div class="a" style="left:700px;top:298px;width:40px;height:19px;border:1px solid #b9b9b9;background:#f7f7f7"></div>
<div class="a" style="left:661px;top:321px;width:70px;height:19px;border:1px solid #b9b9b9;background:#f7f7f7"></div>
<div class="t" style="left:609px;top:347px;font-size:11px;color:#0a800a;font-weight:400;letter-spacing:0px;">Podmn. :</div>
<div class="a" style="left:661px;top:344px;width:45px;height:19px;border:1px solid #b9b9b9;background:#f7f7f7"></div>
<div class="a" style="left:709px;top:344px;width:30px;height:19px;border:1px solid #b9b9b9;background:#f7f7f7"></div>
<div class="t" style="left:609px;top:370px;font-size:11px;color:#0a800a;font-weight:400;letter-spacing:0px;">Výběr :</div>
<div class="a" style="left:665px;top:368px;width:13px;height:13px;border:1px solid #333;background:#fff;border-radius:50%"></div>
<div class="t" style="left:681px;top:370px;font-size:11px;color:#0a800a;font-weight:400;letter-spacing:0px;">Vlastní</div>
<div class="a" style="left:716px;top:368px;width:13px;height:13px;border:1px solid #333;background:#fff;border-radius:50%"></div>
<div class="t" style="left:609px;top:389px;font-size:11px;color:#0a800a;font-weight:400;letter-spacing:0px;">Typ stáje :</div>
<div class="a" style="left:664px;top:387px;width:13px;height:13px;border:1px solid #333;background:#fff"></div>
<div class="t" style="left:683px;top:389px;font-size:11px;color:#0a800a;font-weight:400;letter-spacing:0px;">Základní</div>
<div class="a" style="left:606px;top:421px;width:125px;height:147px;border:1px solid #d5d5d5;border-right:none"></div>
<div class="a" style="left:614px;top:414px;width:95px;height:14px;background:#f5f5f5"></div>
<div class="t" style="left:616px;top:416px;font-size:11px;color:#555;font-weight:700;letter-spacing:0.5px;">Kategorie zvířat</div>
<div class="t" style="left:609px;top:432px;font-size:11px;color:#0a800a;font-weight:400;letter-spacing:0px;">Kateg. od :</div>
<div class="a" style="left:662px;top:429px;width:53px;height:19px;border:1px solid #b9b9b9;background:#f7f7f7"></div>
<div class="t" style="left:609px;top:454px;font-size:11px;color:#0a800a;font-weight:400;letter-spacing:0px;">Kategorie :</div>
<div class="a" style="left:662px;top:451px;width:53px;height:19px;border:1px solid #b9b9b9;background:#f7f7f7"></div>
<div class="a" style="left:717px;top:451px;width:30px;height:19px;border:1px solid #b9b9b9;background:#f7f7f7"></div>
<div class="t" style="left:609px;top:476px;font-size:11px;color:#0a800a;font-weight:400;letter-spacing:0px;">Druh zv.. :</div>
<div class="a" style="left:662px;top:473px;width:23px;height:19px;border:1px solid #b9b9b9;background:#f7f7f7"></div>
<div class="a" style="left:687px;top:473px;width:50px;height:19px;border:1px solid #b9b9b9;background:#f7f7f7"></div>
<div class="t" style="left:609px;top:499px;font-size:11px;color:#0a800a;font-weight:400;letter-spacing:0px;">Podmn. :</div>
<div class="a" style="left:662px;top:496px;width:45px;height:19px;border:1px solid #b9b9b9;background:#f7f7f7"></div>
<div class="a" style="left:709px;top:496px;width:30px;height:19px;border:1px solid #b9b9b9;background:#f7f7f7"></div>
<div class="t" style="left:609px;top:536px;font-size:11px;color:#0a800a;font-weight:400;letter-spacing:0px;">Základní prostředky :</div>
<div class="t" style="left:724px;top:536px;font-size:11px;color:#444;font-weight:400;letter-spacing:0px;">(</div>
<div class="t" style="left:609px;top:553px;font-size:11px;color:#0a800a;font-weight:400;letter-spacing:0px;">Status prasnice :</div>
<div class="t" style="left:724px;top:553px;font-size:11px;color:#444;font-weight:400;letter-spacing:0px;">(</div>
</div>
<div class="a" style="left:274px;top:598px;width:454px;height:118px;background:#fff;border:1px solid #d5d5d5;border-bottom:none"></div>
<div class="a" style="left:275px;top:599px;width:452px;height:16px;background:linear-gradient(#ffffff,#f3f5f7 45%,#d6dee7)"></div>
<div class="a" style="left:275px;top:614px;width:452px;height:1px;background:#d0d4da"></div>
<div class="a" style="left:306px;top:599px;width:1px;height:16px;background:#e0e0e0"></div>
<div class="a" style="left:416px;top:599px;width:1px;height:16px;background:#e0e0e0"></div>
<div class="a" style="left:436px;top:599px;width:1px;height:16px;background:#e0e0e0"></div>
<div class="a" style="left:520px;top:599px;width:1px;height:16px;background:#e0e0e0"></div>
<div class="a" style="left:604px;top:599px;width:1px;height:16px;background:#e0e0e0"></div>
<div class="a" style="left:646px;top:599px;width:1px;height:16px;background:#e0e0e0"></div>
<div class="a" style="left:692px;top:599px;width:1px;height:16px;background:#e0e0e0"></div>
<div class="t" style="left:278px;top:602px;font-size:11px;color:#333;font-weight:400;letter-spacing:0px;">Druh</div>
<div class="t" style="left:310px;top:602px;font-size:11px;color:#333;font-weight:400;letter-spacing:0px;">Název druhu</div>
<div class="t" style="left:440px;top:602px;font-size:11px;color:#0a800a;font-weight:400;letter-spacing:-0.3px;">Klíč OD</div>
<div class="t" style="left:524px;top:602px;font-size:11px;color:#0a800a;font-weight:400;letter-spacing:-0.3px;">Klíč DO</div>
<div class="t" style="left:608px;top:602px;font-size:11px;color:#1a4adb;font-weight:400;letter-spacing:0px;">Zobraz</div>
<div class="t" style="left:650px;top:602px;font-size:11px;color:#e8001c;font-weight:400;letter-spacing:0px;">Povinný</div>
<div class="t" style="left:696px;top:602px;font-size:11px;color:#1a4adb;font-weight:400;letter-spacing:0px;">Spec1</div>
<div class="a" style="left:274px;top:716px;width:454px;height:16px;background:#f0f0f0"></div>
<div class="a" style="left:291px;top:716px;width:216px;height:15px;background:#cdcdcd"></div>
<svg class="a" style="left:277px;top:719px" width="10" height="10" viewBox="0 0 10 10"><path d="M6.5 1.5L3 5L6.5 8.5" fill="none" stroke="#555" stroke-width="1.6"/></svg>
<svg class="a" style="left:715px;top:719px" width="10" height="10" viewBox="0 0 10 10"><path d="M3.5 1.5L7 5L3.5 8.5" fill="none" stroke="#555" stroke-width="1.6"/></svg>
<div class="a" style="left:729px;top:56px;width:1px;height:673px;background:#d5d5d5"></div>
<div class="t" style="left:734px;top:54px;font-size:11px;color:#111;font-weight:400;letter-spacing:0px;">vybrep_pohyby</div>
<div class="t" style="left:739px;top:396px;font-size:12px;color:#000;font-weight:700;letter-spacing:0px;">IQ - Pohyby</div>
<div class="a" style="left:736px;top:412px;width:73px;height:21px;background:#cccccc;border:1px solid #bfbfbf"></div>
<div class="t" style="left:736px;top:417px;width:73px;text-align:center;font-size:11px;color:#8a8a8a;letter-spacing:-0.15px">Výběr šablony</div>
<div class="a" style="left:736px;top:453px;width:60px;height:21px;background:#cccccc;border:1px solid #bfbfbf"></div>
<div class="t" style="left:736px;top:458px;width:60px;text-align:center;font-size:11px;color:#8a8a8a;letter-spacing:-0.15px">Hrom.pošta</div>
<div class="a" style="left:797px;top:453px;width:12px;height:21px;background:#cccccc;border:1px solid #bfbfbf"></div>
<svg class="a" style="left:799px;top:459px" width="8" height="8" viewBox="0 0 8 8"><path d="M0 0H8L4 8Z" fill="#8a8a8a"/></svg>
<div class="a" style="left:736px;top:494px;width:73px;height:21px;background:#cccccc;border:1px solid #bfbfbf"></div>
<div class="t" style="left:736px;top:499px;width:73px;text-align:center;font-size:11px;color:#8a8a8a;letter-spacing:-0.15px"><u>G</u>raf</div>
<div class="a" style="left:736px;top:520px;width:73px;height:21px;background:#cccccc;border:1px solid #bfbfbf"></div>
<div class="t" style="left:736px;top:525px;width:73px;text-align:center;font-size:11px;color:#8a8a8a;letter-spacing:-0.15px">Strom</div>
<div class="a" style="left:736px;top:546px;width:60px;height:21px;background:#cccccc;border:1px solid #bfbfbf"></div>
<div class="t" style="left:736px;top:551px;width:60px;text-align:center;font-size:11px;color:#8a8a8a;letter-spacing:-0.15px">OLAP</div>
<div class="a" style="left:797px;top:546px;width:12px;height:21px;background:#cccccc;border:1px solid #bfbfbf"></div>
<svg class="a" style="left:799px;top:552px" width="8" height="8" viewBox="0 0 8 8"><path d="M0 0H8L4 8Z" fill="#8a8a8a"/></svg>
<div class="a" style="left:736px;top:587px;width:73px;height:21px;background:#cccccc;border:1px solid #bfbfbf"></div>
<div class="t" style="left:736px;top:592px;width:73px;text-align:center;font-size:11px;color:#8a8a8a;letter-spacing:-0.15px"><u>S</u>estava</div>
<div class="a" style="left:736px;top:613px;width:60px;height:21px;background:#cccccc;border:1px solid #bfbfbf"></div>
<div class="t" style="left:736px;top:618px;width:60px;text-align:center;font-size:11px;color:#8a8a8a;letter-spacing:-0.15px">Data</div>
<div class="a" style="left:797px;top:613px;width:12px;height:21px;background:#cccccc;border:1px solid #bfbfbf"></div>
<svg class="a" style="left:799px;top:619px" width="8" height="8" viewBox="0 0 8 8"><path d="M0 0H8L4 8Z" fill="#8a8a8a"/></svg>
<div class="t" style="left:759px;top:663px;font-size:12px;color:#000;font-weight:700;letter-spacing:0px;">Klíče</div>
<div class="a" style="left:736px;top:680px;width:73px;height:21px;background:#e1e1e1;border:1px solid #adadad"></div>
<div class="t" style="left:736px;top:685px;width:73px;text-align:center;font-size:11.5px;color:#000;letter-spacing:-0.1px">Zavřít</div>
<div class="a" style="left:736px;top:706px;width:73px;height:21px;background:#e1e1e1;border:1px solid #adadad"></div>
<div class="t" style="left:736px;top:711px;width:73px;text-align:center;font-size:11.5px;color:#000;letter-spacing:-0.1px">Nápověda</div>
<div class="a" style="left:2px;top:734px;width:812px;height:18px;background:#f7f7f7"></div>
<div class="a" style="left:4px;top:733px;width:808px;height:1px;background:#dadada"></div>
<div class="a" style="left:688px;top:736px;width:1px;height:14px;background:#dadada"></div>
<div class="t" style="left:755px;top:737px;font-size:12px;color:#111;font-weight:400;letter-spacing:0px;">0/0 &nbsp;0/0</div>
<svg class="a" style="left:4px;top:735px" width="17" height="17" viewBox="0 0 17 17"><circle cx="8.5" cy="8.5" r="7.5" fill="#fff" stroke="#7cc0f4" stroke-width="1"/><rect x="7.5" y="7" width="2" height="6" fill="#1a5fc9"/><rect x="7.5" y="4" width="2" height="2" fill="#1a5fc9"/></svg>
<svg class="a" style="left:800px;top:740px" width="14" height="12" viewBox="0 0 14 12"><path d="M4.5 11L14.5 1M9 11L14.5 5.5M13 11L14.5 9.5" stroke="#fff" stroke-width="1.2" transform="translate(-1,-1)"/><path d="M5.5 11.5L14.5 2.5M9.5 11.5L14.5 6.5M13.5 11.5L14.5 10.5" stroke="#8a8a8a" stroke-width="1.4"/></svg>
<svg class="a" style="left:308px;top:58px" width="18" height="18" viewBox="0 0 18 18"><path d="M1.5 15.5V4.5H5.5L7 6H13.5V9" fill="#fff" stroke="#2a78d8" stroke-width="1.3" stroke-linejoin="round"/><path d="M1.3 16.5L4 10.3H16.5L13.8 16.5Z" fill="#9ccbf5" stroke="#2a78d8" stroke-width="1.3" stroke-linejoin="round"/><path d="M9.5 4.2Q12.5 0.8 15.8 3" fill="none" stroke="#2a78d8" stroke-width="1.2"/><path d="M17.2 1.8L17.2 5.2L13.8 4.6Z" fill="#2a78d8"/></svg>
<svg class="a" style="left:583px;top:131px" width="18" height="18" viewBox="0 0 18 18"><path d="M1.5 15.5V4.5H5.5L7 6H13.5V9" fill="#fff" stroke="#2a78d8" stroke-width="1.3" stroke-linejoin="round"/><path d="M1.3 16.5L4 10.3H16.5L13.8 16.5Z" fill="#9ccbf5" stroke="#2a78d8" stroke-width="1.3" stroke-linejoin="round"/><path d="M9.5 4.2Q12.5 0.8 15.8 3" fill="none" stroke="#2a78d8" stroke-width="1.2"/><path d="M17.2 1.8L17.2 5.2L13.8 4.6Z" fill="#2a78d8"/></svg>
<svg class="a" style="left:331px;top:58px" width="16" height="16" viewBox="0 0 16 16"><path d="M3 6L6.5 2.5M10.5 13.5L14 10" stroke="#9fcdf6" stroke-width="0.8"/><path d="M2 14L3 10.5L11.5 2L14 4.5L5.5 13Z" fill="#a6d0f7" stroke="#2a78d8" stroke-width="1.2" stroke-linejoin="round"/><path d="M2 14L3 10.5L5.5 13Z" fill="#2a78d8"/></svg>
<div class="a" style="left:362px;top:56px;width:20px;height:20px;border:1px solid #8a8a8a;background:#f9f9f9"></div>
<svg class="a" style="left:364px;top:57px" width="16" height="16" viewBox="0 0 16 16"><circle cx="7.8" cy="8" r="4.6" fill="none" stroke="#c9f0c9" stroke-width="3.6"/><circle cx="7.8" cy="8" r="6.5" fill="none" stroke="#3f9f3f" stroke-width="1.1"/><circle cx="7.8" cy="8" r="2.6" fill="#fff" stroke="#3f9f3f" stroke-width="1.1"/></svg>
<svg class="a" style="left:383px;top:58px" width="17" height="14" viewBox="0 0 17 14"><path d="M7.2 1.2Q2.2 6.5 4.2 13.5M14.2 1.2Q9.2 6.5 11.2 13.5" fill="none" stroke="#e3262f" stroke-width="3.4"/><path d="M7.2 1.2Q2.2 6.5 4.2 13.5M14.2 1.2Q9.2 6.5 11.2 13.5" fill="none" stroke="#fde8e8" stroke-width="1.1"/></svg>
<svg class="a" style="left:404px;top:58px" width="16" height="16" viewBox="0 0 16 16"><path d="M8 0.8L10 5.8L15.2 6.2L11.2 9.4L12.6 14.6L8 11.6L3.4 14.6L4.8 9.4L0.8 6.2L6 5.8Z" fill="#f6d55c" stroke="#e2b323" stroke-width="0.9" stroke-linejoin="round"/><path d="M8 4L9.2 7H6.8Z" fill="#fbe9a6"/></svg>
<div class="a" style="left:344px;top:71px;width:177px;height:186px;background:rgba(0,0,0,0.33);filter:blur(1.2px)"></div>
<div class="a" style="left:342px;top:69px;width:176px;height:185px;background:#f0f0f0;border:1px solid #a0a0a0"></div>
<div class="t" style="left:385px;top:78px;font-size:11px;color:#000;font-weight:400;letter-spacing:0.3px;">Nová</div>
<div class="t" style="left:385px;top:102px;font-size:11px;color:#8d8d8d;font-weight:400;letter-spacing:0.05px;">Kopírovat</div>
<div class="t" style="left:385px;top:126px;font-size:11px;color:#8d8d8d;font-weight:400;letter-spacing:0.05px;">Upravit</div>
<div class="t" style="left:385px;top:150px;font-size:11px;color:#8d8d8d;font-weight:400;letter-spacing:0.05px;">Zobrazit</div>
<div class="a" style="left:375px;top:169px;width:140px;height:1px;background:#1a1a60"></div>
<div class="a" style="left:375px;top:170px;width:140px;height:1px;background:#ffffff"></div>
<div class="t" style="left:385px;top:178px;font-size:11px;color:#000;font-weight:400;letter-spacing:0.05px;">Podle okna</div>
<svg class="a" style="left:503px;top:179px" width="5" height="8" viewBox="0 0 5 8"><path d="M0 0L5 4L0 8Z" fill="#000"/></svg>
<div class="a" style="left:341px;top:195px;width:178px;height:31px;border:3px solid #e5141f"></div>
<div class="t" style="left:385px;top:206px;font-size:11px;color:#000;font-weight:700;letter-spacing:0.3px;">Správa</div>
<div class="t" style="left:385px;top:234px;font-size:11px;color:#8d8d8d;font-weight:400;letter-spacing:-0.15px;">Všechny zavedené</div>
<svg class="a" style="left:503px;top:235px" width="5" height="8" viewBox="0 0 5 8"><path d="M0 0L5 4L0 8Z" fill="#000"/></svg></body></html>
